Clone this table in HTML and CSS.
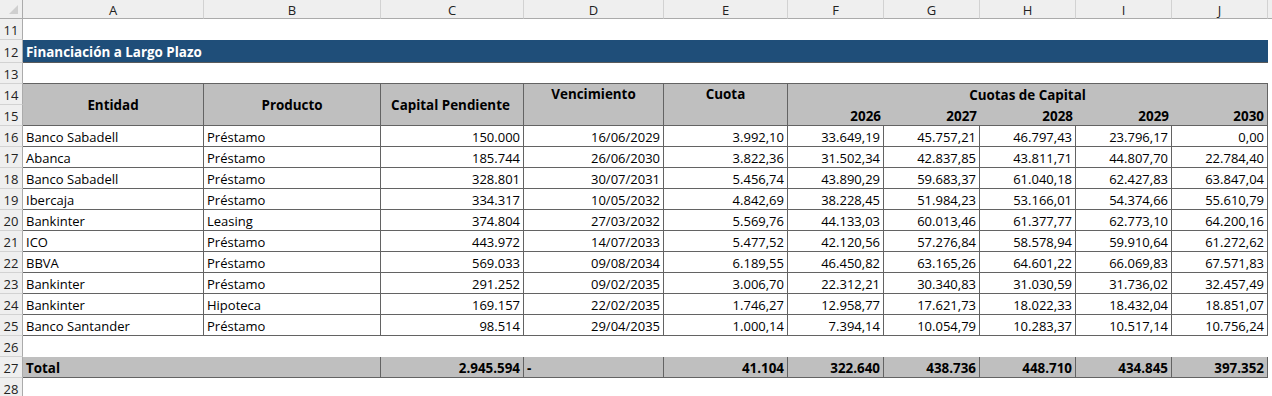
FILE: index.html
```html
<!DOCTYPE html>
<html lang="es">
<head>
<meta charset="utf-8">
<title>Financiación a Largo Plazo</title>
<link rel="stylesheet" href="styles.css">
</head>
<body>
<div class="sheet">
  <!-- column headers -->
  <div class="c ch corner"><svg class="corner-tri" width="9" height="9" viewBox="0 0 9 9"><polygon points="9,0 9,9 0,9" fill="#cfcfcf"/></svg></div>
  <div class="c ch">A</div><div class="c ch">B</div><div class="c ch">C</div><div class="c ch">D</div><div class="c ch">E</div>
  <div class="c ch">F</div><div class="c ch">G</div><div class="c ch">H</div><div class="c ch">I</div><div class="c ch">J</div><div class="c ch"></div>

  <!-- 11 -->
  <div class="c rh">11</div><div class="c blank span-all"></div>
  <!-- 12 -->
  <div class="c rh">12</div><div class="c title">Financiación a Largo Plazo</div><div class="c"></div>
  <!-- 13 -->
  <div class="c rh">13</div><div class="c blank span-aj line-below"></div><div class="c"></div>
  <!-- 14 -->
  <div class="c rh">14</div>
  <div class="c h span-rows mid">Entidad</div>
  <div class="c h span-rows mid">Producto</div>
  <div class="c h span-rows mid cap">Capital Pendiente</div>
  <div class="c h span-rows top">Vencimiento</div>
  <div class="c h span-rows top">Cuota</div>
  <div class="c h group">Cuotas de Capital</div>
  <div class="c"></div>
  <!-- 15 -->
  <div class="c rh">15</div>
  <div class="c h yr">2026</div><div class="c h yr">2027</div><div class="c h yr">2028</div><div class="c h yr">2029</div><div class="c h yr yr-last">2030</div>
  <div class="c"></div>

  <div class="c rh">16</div><div class="c d">Banco Sabadell</div><div class="c d">Préstamo</div><div class="c d n">150.000</div><div class="c d n">16/06/2029</div><div class="c d n">3.992,10</div><div class="c d n">33.649,19</div><div class="c d n">45.757,21</div><div class="c d n">46.797,43</div><div class="c d n">23.796,17</div><div class="c d n">0,00</div><div class="c"></div>
  <div class="c rh">17</div><div class="c d">Abanca</div><div class="c d">Préstamo</div><div class="c d n">185.744</div><div class="c d n">26/06/2030</div><div class="c d n">3.822,36</div><div class="c d n">31.502,34</div><div class="c d n">42.837,85</div><div class="c d n">43.811,71</div><div class="c d n">44.807,70</div><div class="c d n">22.784,40</div><div class="c"></div>
  <div class="c rh">18</div><div class="c d">Banco Sabadell</div><div class="c d">Préstamo</div><div class="c d n">328.801</div><div class="c d n">30/07/2031</div><div class="c d n">5.456,74</div><div class="c d n">43.890,29</div><div class="c d n">59.683,37</div><div class="c d n">61.040,18</div><div class="c d n">62.427,83</div><div class="c d n">63.847,04</div><div class="c"></div>
  <div class="c rh">19</div><div class="c d">Ibercaja</div><div class="c d">Préstamo</div><div class="c d n">334.317</div><div class="c d n">10/05/2032</div><div class="c d n">4.842,69</div><div class="c d n">38.228,45</div><div class="c d n">51.984,23</div><div class="c d n">53.166,01</div><div class="c d n">54.374,66</div><div class="c d n">55.610,79</div><div class="c"></div>
  <div class="c rh">20</div><div class="c d">Bankinter</div><div class="c d">Leasing</div><div class="c d n">374.804</div><div class="c d n">27/03/2032</div><div class="c d n">5.569,76</div><div class="c d n">44.133,03</div><div class="c d n">60.013,46</div><div class="c d n">61.377,77</div><div class="c d n">62.773,10</div><div class="c d n">64.200,16</div><div class="c"></div>
  <div class="c rh">21</div><div class="c d">ICO</div><div class="c d">Préstamo</div><div class="c d n">443.972</div><div class="c d n">14/07/2033</div><div class="c d n">5.477,52</div><div class="c d n">42.120,56</div><div class="c d n">57.276,84</div><div class="c d n">58.578,94</div><div class="c d n">59.910,64</div><div class="c d n">61.272,62</div><div class="c"></div>
  <div class="c rh">22</div><div class="c d">BBVA</div><div class="c d">Préstamo</div><div class="c d n">569.033</div><div class="c d n">09/08/2034</div><div class="c d n">6.189,55</div><div class="c d n">46.450,82</div><div class="c d n">63.165,26</div><div class="c d n">64.601,22</div><div class="c d n">66.069,83</div><div class="c d n">67.571,83</div><div class="c"></div>
  <div class="c rh">23</div><div class="c d">Bankinter</div><div class="c d">Préstamo</div><div class="c d n">291.252</div><div class="c d n">09/02/2035</div><div class="c d n">3.006,70</div><div class="c d n">22.312,21</div><div class="c d n">30.340,83</div><div class="c d n">31.030,59</div><div class="c d n">31.736,02</div><div class="c d n">32.457,49</div><div class="c"></div>
  <div class="c rh">24</div><div class="c d">Bankinter</div><div class="c d">Hipoteca</div><div class="c d n">169.157</div><div class="c d n">22/02/2035</div><div class="c d n">1.746,27</div><div class="c d n">12.958,77</div><div class="c d n">17.621,73</div><div class="c d n">18.022,33</div><div class="c d n">18.432,04</div><div class="c d n">18.851,07</div><div class="c"></div>
  <div class="c rh">25</div><div class="c d">Banco Santander</div><div class="c d">Préstamo</div><div class="c d n">98.514</div><div class="c d n">29/04/2035</div><div class="c d n">1.000,14</div><div class="c d n">7.394,14</div><div class="c d n">10.054,79</div><div class="c d n">10.283,37</div><div class="c d n">10.517,14</div><div class="c d n">10.756,24</div><div class="c"></div>

  <!-- 26 -->
  <div class="c rh">26</div><div class="c blank span-aj"></div><div class="c"></div>
  <!-- 27 -->
  <div class="c rh">27</div><div class="c t span-ab">Total</div><div class="c t n">2.945.594</div><div class="c t">-</div><div class="c t n">41.104</div><div class="c t n">322.640</div><div class="c t n">438.736</div><div class="c t n">448.710</div><div class="c t n">434.845</div><div class="c t n">397.352</div><div class="c"></div>
  <!-- 28 -->
  <div class="c rh">28</div><div class="c blank span-all"></div>
</div>
</body>
</html>
```

FILE: styles.css
```css
html, body {
  margin: 0;
  padding: 0;
  background: #ffffff;
  overflow: hidden;
}

body {
  font-family: "Open Sans", "Noto Sans", sans-serif;
  font-size: 13px;
  color: #000000;
}

.sheet {
  display: grid;
  width: 1272px;
  grid-template-columns: 23px 181px 177px 143px 140px 124px repeat(5, 96px) 1fr;
  grid-template-rows: 19px 21px 23px 21px 21px 21px repeat(10, 21px) 21px 21px 21px;
}

.c {
  box-sizing: border-box;
  display: flex;
  align-items: center;
  justify-content: flex-start;
  padding: 1px 3px 0;
  line-height: 18px;
  white-space: nowrap;
  overflow: hidden;
  min-width: 0;
}

/* column headers */
.ch {
  background: #efefef;
  color: #222222;
  justify-content: center;
  padding: 1px 0 0;
  border-right: 1px solid #d2d2d2;
  border-bottom: 1px solid #ababab;
}

.corner {
  position: relative;
  border-right-color: #ababab;
}

.corner-tri {
  position: absolute;
  right: 4px;
  bottom: 4px;
}

/* row headers */
.rh {
  background: #efefef;
  color: #222222;
  justify-content: center;
  padding: 1px 0 0;
  border-right: 1px solid #ababab;
  border-bottom: 1px solid #d2d2d2;
}

.span-all { grid-column: span 11; }
.span-aj { grid-column: span 10; }
.span-ab { grid-column: span 2; }
.span-rows { grid-row: span 2; }

.line-below { border-bottom: 1px solid #636363; }

/* title bar */
.title {
  grid-column: span 10;
  background: #1f4e79;
  color: #ffffff;
  font-weight: bold;
  font-size: 13.4px;
  border-bottom: 1px solid #5a5a5a;
}

/* table header */
.h {
  background: #bfbfbf;
  font-weight: bold;
  font-size: 13.4px;
  border-right: 1px solid #636363;
  border-bottom: 1px solid #636363;
}

.h.mid { justify-content: center; }

.h.cap { padding: 1px 3px 0 0; }

.h.top {
  justify-content: center;
  align-items: flex-start;
}

.h.group {
  grid-column: span 5;
  justify-content: center;
  border-bottom: none;
}

.h.yr {
  justify-content: flex-end;
  border-right: none;
}

.h.yr.yr-last { border-right: 1px solid #636363; }

/* data */
.d {
  border-right: 1px solid #636363;
  border-bottom: 1px solid #636363;
}

.t {
  background: #bfbfbf;
  font-weight: bold;
  font-size: 13.4px;
  border-right: 1px solid #636363;
  border-bottom: 1px solid #636363;
}

.n { justify-content: flex-end; }
```
